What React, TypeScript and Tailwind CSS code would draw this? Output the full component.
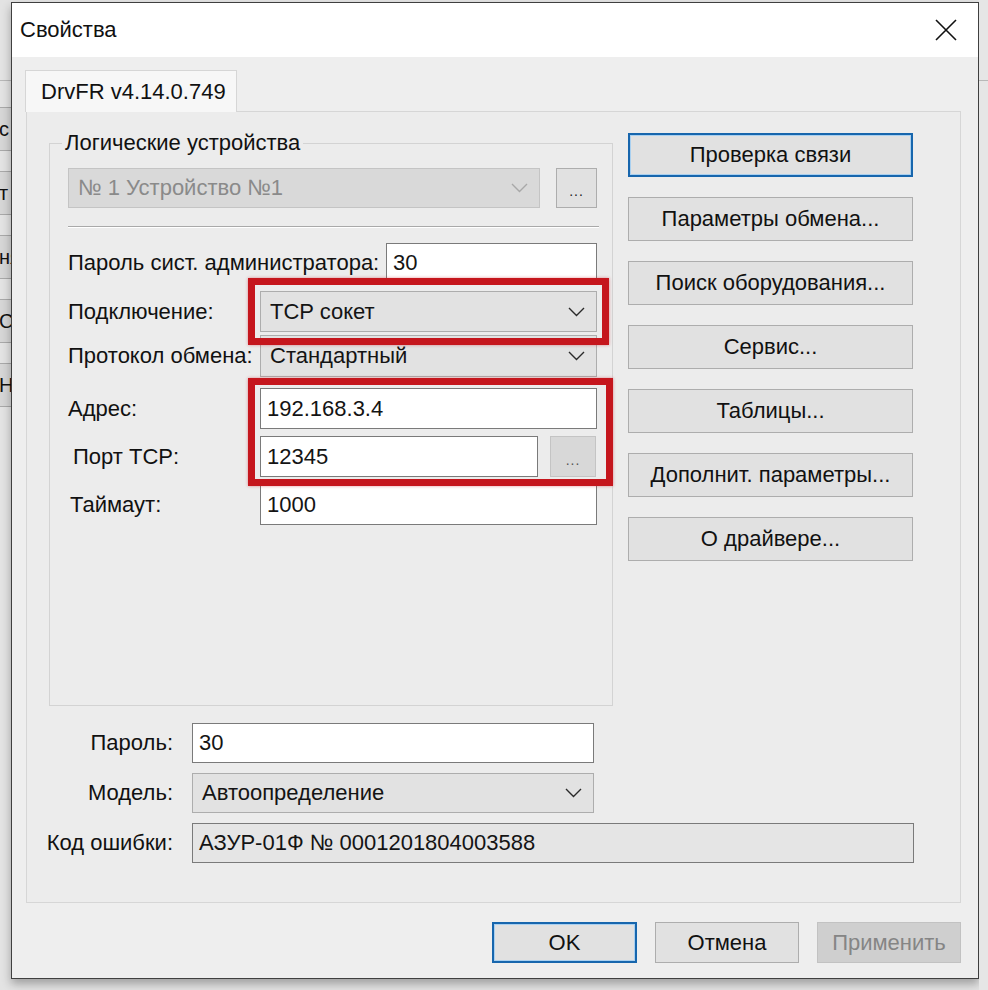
import clsx from 'clsx';

const Chevron = ({ muted }: { muted?: boolean }) => (
  <svg width="17" height="10" viewBox="0 0 17 10" className="shrink-0">
    <polyline points="1,1 8.5,8.5 16,1" fill="none" stroke={muted ? '#a8a8a8' : '#2a2a2a'} strokeWidth="1.4" />
  </svg>
);

interface FieldProps {
  value: string;
  className?: string;
  disabled?: boolean;
  readOnly?: boolean;
}

const Combo = ({ value, className, disabled }: FieldProps) => (
  <div
    className={clsx(
      'flex items-center justify-between border pl-[9px] pr-[11px]',
      disabled ? 'border-[#c4c4c4] bg-[#d9d9d9] text-[#8a8a8a]' : 'border-[#adadad] bg-[#e2e2e2] text-[#141414]',
      className,
    )}
  >
    <span>{value}</span>
    <Chevron muted={disabled} />
  </div>
);

const TextBox = ({ value, className, readOnly }: FieldProps) => (
  <div
    className={clsx(
      'flex items-center border border-[#7a7a7a] pl-[6px] text-[#141414]',
      readOnly ? 'bg-[#e5e5e5]' : 'bg-white',
      className,
    )}
  >
    {value}
  </div>
);

interface BtnProps {
  label: string;
  className?: string;
  focused?: boolean;
  disabled?: boolean;
}

const Btn = ({ label, className, focused, disabled }: BtnProps) => (
  <div
    className={clsx(
      'flex shrink-0 items-center justify-center',
      focused && 'border-2 border-[#1766ad] bg-[#e1e1e1] shadow-[inset_0_0_0_1px_#a9d0f0] text-[#111]',
      !focused && !disabled && 'border border-[#adadad] bg-[#e1e1e1] text-[#111]',
      disabled && 'border border-[#c2c2c2] bg-[#cfcfcf] text-[#858585]',
      className,
    )}
  >
    {label}
  </div>
);

const DotsBtn = ({ className, dim }: { className?: string; dim?: boolean }) => (
  <div
    className={clsx(
      'flex shrink-0 items-end justify-center pb-[9px] text-[14px] tracking-[1px]',
      dim ? 'border border-[#c4c4c4] bg-[#d8d8d8] text-[#555]' : 'border border-[#adadad] bg-[#e1e1e1] text-[#222]',
      className,
    )}
  >
    ...
  </div>
);

const RedFrame = ({ className }: { className: string }) => (
  <div className={clsx('pointer-events-none absolute border-[7px] border-[#c5161d] shadow-[0_0_3px_rgba(200,20,30,0.45)]', className)} />
);

const sideButtons = [
  'Проверка связи',
  'Параметры обмена...',
  'Поиск оборудования...',
  'Сервис...',
  'Таблицы...',
  'Дополнит. параметры...',
  'О драйвере...',
];

// the window behind the dialog: only a sliver of it is visible
const backCells = ['с', 'т', 'ня', 'Сн', 'Н'];

const BackStrip = () => (
  <div className="flex w-[11px] shrink-0 flex-col overflow-hidden bg-[#e3e3e3]">
    <div className="mt-[80px] h-px shrink-0 bg-[#b8b8b8]" />
    {backCells.map((t, i) => (
      <div
        key={t}
        className={clsx(
          'flex h-[44px] shrink-0 items-center border-y border-[#a9a9a9] bg-[#d6d6d6] text-[20px] text-[#111]',
          i === 0 ? 'mt-[26px]' : 'mt-[20px]',
        )}
      >
        <span className="-ml-[1px] whitespace-nowrap">{t}</span>
      </div>
    ))}
  </div>
);

export default function App() {
  return (
    <div className="flex h-[990px] w-[988px] overflow-hidden bg-[#e4e4e4] font-['Liberation_Sans',Arial,sans-serif] text-[22px] leading-none text-[#111]">
      <BackStrip />

      <div className="mt-[2px] flex h-[977px] w-[968px] shrink-0 flex-col border border-[#3f3f3f] bg-[#eeeeee] shadow-[0_5px_9px_rgba(0,0,0,0.3)]">
        {/* title bar */}
        <div className="flex h-[54px] shrink-0 items-center justify-between bg-white pl-[8px] pr-[21px]">
          <span>Свойства</span>
          <svg width="22" height="22" viewBox="0 0 22 22">
            <path d="M1 1 L21 21 M21 1 L1 21" stroke="#111" strokeWidth="1.6" />
          </svg>
        </div>

        <div className="flex flex-1 flex-col pl-[13px] pr-[17px] pt-[13px]">
          {/* tab */}
          <div className="relative z-10 flex h-[42px] w-[212px] items-center border border-b-0 border-[#d6d6d6] bg-[#f7f7f7] pl-[15px]">
            DrvFR v4.14.0.749
          </div>

          {/* tab page */}
          <div className="-mt-px ml-px flex h-[792px] flex-col border border-[#d6d6d6] bg-[#ececec]">
            <div className="flex items-start">
              <fieldset className="relative ml-[22px] mt-[20px] h-[574px] w-[564px] border border-[#d3d3d3] pl-[18px] pr-[15px]">
                <legend className="-ml-[6px] h-[22px] px-[3px] leading-[22px]">Логические устройства</legend>

                <div className="mt-[14px] flex h-[40px] gap-[16px]">
                  <Combo value="№ 1 Устройство №1" disabled className="flex-1" />
                  <DotsBtn className="w-[41px]" />
                </div>

                <div className="-mr-[2px] mt-[18px] h-[2px] border-t border-b border-t-[#a9a9a9] border-b-white" />

                <div className="mt-[15px] flex h-[40px] items-center">
                  <span className="w-[318px] shrink-0">Пароль сист. администратора:</span>
                  <TextBox value="30" className="h-full flex-1" />
                </div>

                <div className="relative mt-[8px] flex h-[41px] items-center">
                  <span className="w-[192px] shrink-0">Подключение:</span>
                  <Combo value="TCP сокет" className="h-full flex-1" />
                  <RedFrame className="-bottom-[13px] -right-[12px] -top-[13px] left-[180px]" />
                </div>

                <div className="mt-[3px] flex h-[42px] items-center">
                  <span className="w-[192px] shrink-0">Протокол обмена:</span>
                  <Combo value="Стандартный" className="h-full flex-1" />
                </div>

                <div className="relative mt-[11px]">
                  <div className="flex h-[41px] items-center">
                    <span className="w-[192px] shrink-0">Адрес:</span>
                    <TextBox value="192.168.3.4" className="h-full flex-1" />
                  </div>
                  <div className="mt-[7px] flex h-[41px] items-center">
                    <span className="w-[192px] shrink-0 pl-[5px]">Порт TCP:</span>
                    <TextBox value="12345" className="h-full w-[278px]" />
                    <DotsBtn dim className="ml-[12px] h-full w-[46px]" />
                  </div>
                  <RedFrame className="-bottom-[9px] -right-[16px] -top-[10px] left-[180px]" />
                </div>

                <div className="mt-[8px] flex h-[40px] items-center">
                  <span className="w-[192px] shrink-0 pl-[2px]">Таймаут:</span>
                  <TextBox value="1000" className="h-full flex-1" />
                </div>
              </fieldset>

              <div className="ml-[15px] mt-[21px] flex w-[285px] flex-col gap-[20px]">
                {sideButtons.map((b, i) => (
                  <Btn key={b} label={b} focused={i === 0} className="h-[44px]" />
                ))}
              </div>
            </div>

            <div className="mt-[17px] flex flex-col gap-[10px]">
              <div className="flex h-[40px] items-center">
                <span className="w-[146px] shrink-0 text-right">Пароль:</span>
                <TextBox value="30" className="ml-[19px] h-full w-[402px]" />
              </div>
              <div className="flex h-[40px] items-center">
                <span className="w-[146px] shrink-0 text-right">Модель:</span>
                <Combo value="Автоопределение" className="ml-[19px] h-full w-[402px]" />
              </div>
              <div className="flex h-[40px] items-center">
                <span className="w-[146px] shrink-0 text-right">Код ошибки:</span>
                <TextBox value="АЗУР-01Ф № 0001201804003588" readOnly className="ml-[19px] h-full w-[722px]" />
              </div>
            </div>
          </div>

          {/* dialog buttons */}
          <div className="mt-[19px] flex justify-end gap-[18px]">
            <Btn label="OK" focused className="h-[41px] w-[145px]" />
            <Btn label="Отмена" className="h-[41px] w-[144px]" />
            <Btn label="Применить" disabled className="h-[41px] w-[144px]" />
          </div>
        </div>
      </div>

      <div className="flex flex-1 flex-col bg-[#e6e6e6]">
        <div className="mt-[80px] h-px bg-[#b8b8b8]" />
      </div>
    </div>
  );
}
